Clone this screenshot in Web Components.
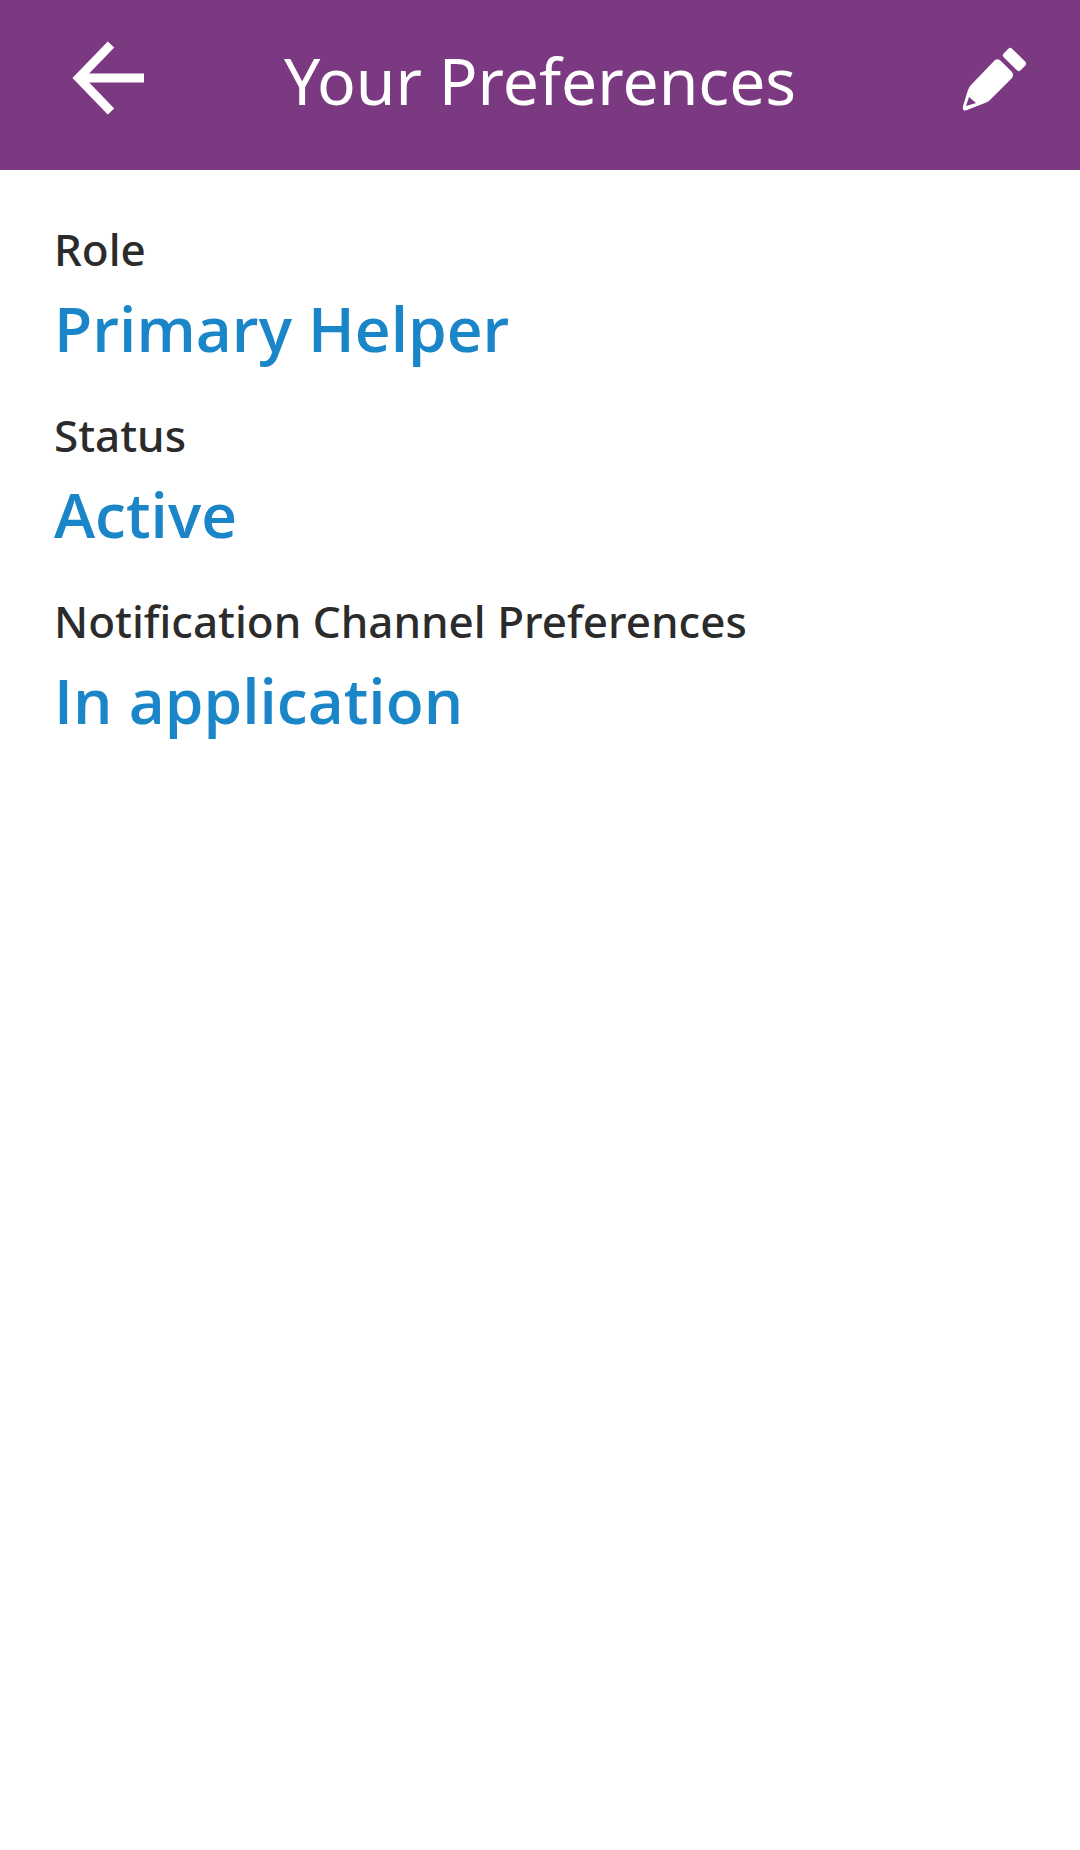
<!DOCTYPE html>
<html>
<head>
<meta charset="utf-8">
<title>Your Preferences</title>
<style>
  html, body { margin: 0; padding: 0; background: #fff; }
  body { font-family: "Noto Sans", "Open Sans", sans-serif; }
</style>
</head>
<body>
<app-header title-text="Your Preferences"></app-header>
<pref-list>
  <pref-item label="Role" value="Primary Helper"></pref-item>
  <pref-item label="Status" value="Active"></pref-item>
  <pref-item label="Notification Channel Preferences" value="In application"></pref-item>
</pref-list>

<script>
class AppHeader extends HTMLElement {
  constructor() {
    super();
    this.attachShadow({ mode: "open" });
    this.shadowRoot.innerHTML = `
      <style>
        :host {
          display: grid;
          grid-template-columns: 76px 1fr 68px;
          align-items: center;
          height: 170px;
          padding: 0 52px 0 70px;
          background: #7a3981;
          color: #fff;
        }
        h1 {
          margin: 0 0 10px;
          text-align: center;
          font: 400 64.2px/1 "Noto Sans", sans-serif;
          transform: translateX(-13px);
        }
        svg { display: block; }
        .back { margin-top: -14px; }
        .edit { margin-top: -10px; }
      </style>
      <svg class="back" width="76" height="76" viewBox="0 0 76 76" fill="none" stroke="#fff" stroke-width="9">
        <path d="M41 4.5 L8.7 38 L41 71.5 M8.7 38 H74"/>
      </svg>
      <h1>${this.getAttribute("title-text")}</h1>
      <svg class="edit" width="68" height="68" viewBox="960 46 68 68" fill="#fff">
        <path fill-rule="evenodd" d="M995 60 Q998 58 1001 61 L1012 72 Q1014 75 1012 78 L990 100 Q988 102 985 103 L967 110 Q962 112 963 106 L968 90 Q969 87 971 85 Z M969 97 L966 106 L976 103 Z"/>
        <rect x="1002.5" y="53.5" width="24" height="12" rx="3" transform="rotate(45 1014.5 59.5)"/>
      </svg>
    `;
  }
}

class PrefList extends HTMLElement {
  constructor() {
    super();
    this.attachShadow({ mode: "open" });
    this.shadowRoot.innerHTML = `
      <style>
        :host { display: flex; flex-direction: column; gap: 39px; padding: 52px 54px 0; }
      </style>
      <slot></slot>
    `;
  }
}

class PrefItem extends HTMLElement {
  constructor() {
    super();
    this.attachShadow({ mode: "open" });
    this.shadowRoot.innerHTML = `
      <style>
        :host { display: block; }
        .label { font: 500 44px/54px "Noto Sans", sans-serif; color: #2b2b2b; }
        .value { font: 600 62.2px/82px "Open Sans", sans-serif; color: #1a86c8; margin-top: 11px; }
      </style>
      <div class="label">${this.getAttribute("label")}</div>
      <div class="value">${this.getAttribute("value")}</div>
    `;
  }
}

customElements.define("app-header", AppHeader);
customElements.define("pref-list", PrefList);
customElements.define("pref-item", PrefItem);
</script>
</body>
</html>
